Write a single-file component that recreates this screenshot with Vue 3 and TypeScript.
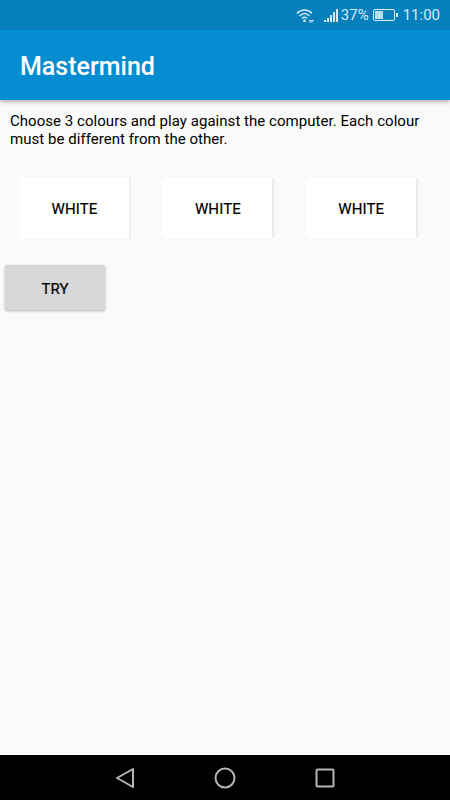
<script setup lang="ts">
const colours: string[] = ["WHITE", "WHITE", "WHITE"];
</script>

<template>
  <div class="screen">
    <div class="status-bar">
      <svg class="wifi" width="18" height="15" viewBox="0 0 18 15">
        <path d="M1 5.4C5.4 1 11.6 1 16 5.4" fill="none" stroke="#d6eaf6" stroke-width="1.5" />
        <path d="M3.5 8C6.6 5 10.4 5 13.5 8" fill="none" stroke="#d6eaf6" stroke-width="1.5" />
        <path d="M6 10.5C7.6 9 9.4 9 11 10.5" fill="none" stroke="#d6eaf6" stroke-width="1.5" />
        <circle cx="8.5" cy="12.8" r="1.4" fill="#d6eaf6" />
        <path d="M13 12.5h5M13 14h4" stroke="#d6eaf6" stroke-width="0.9" />
      </svg>
      <svg class="signal" width="15" height="13" viewBox="0 0 15 13">
        <rect x="0" y="11" width="2" height="2" fill="#d6eaf6" />
        <rect x="3" y="9" width="2" height="4" fill="#d6eaf6" />
        <rect x="6" y="6" width="2" height="7" fill="#d6eaf6" />
        <rect x="9" y="3" width="2" height="10" fill="#d6eaf6" />
        <rect x="12" y="0" width="2" height="13" fill="#d6eaf6" />
      </svg>
      <span class="percent">37%</span>
      <svg class="battery" width="25" height="12" viewBox="0 0 25 12">
        <rect x="0.5" y="0.5" width="21" height="11" rx="1.5" fill="none" stroke="#d6eaf6" />
        <rect x="2" y="2" width="8" height="8" fill="#bcdcf0" />
        <rect x="23" y="4" width="2" height="4" fill="#d6eaf6" />
      </svg>
      <span class="time">11:00</span>
    </div>

    <header class="app-bar">
      <h1>Mastermind</h1>
    </header>

    <main class="content">
      <p class="intro">Choose 3 colours and play against the computer. Each colour must be different from the other.</p>

      <div class="picker-row">
        <button v-for="(c, i) in colours" :key="i" class="picker">{{ c }}</button>
      </div>

      <button class="try">TRY</button>
    </main>

    <nav class="nav-bar">
      <svg width="20" height="22" viewBox="0 0 20 22">
        <path d="M18 2L2 11L18 20Z" fill="none" stroke="#b5b5b5" stroke-width="2" stroke-linejoin="round" />
      </svg>
      <svg width="22" height="22" viewBox="0 0 22 22">
        <circle cx="11" cy="11" r="9.5" fill="none" stroke="#b5b5b5" stroke-width="2" />
      </svg>
      <svg width="20" height="20" viewBox="0 0 20 20">
        <rect x="1.5" y="1.5" width="17" height="17" rx="1" fill="none" stroke="#b5b5b5" stroke-width="2" />
      </svg>
    </nav>
  </div>
</template>

<style>
html, body {
  margin: 0;
  background: #fafafa;
}
</style>

<style scoped>
.screen {
  width: 450px;
  height: 800px;
  display: flex;
  flex-direction: column;
  background: #fafafa;
  font-family: Roboto, "Liberation Sans", sans-serif;
  overflow: hidden;
}
.status-bar {
  height: 30px;
  flex: none;
  background: #0680bd;
  color: #d6eaf6;
  display: flex;
  align-items: center;
  justify-content: flex-end;
  padding-right: 10px;
  font-size: 15px;
  box-sizing: border-box;
}
.wifi { margin-right: 10px; }
.signal { margin-right: 2px; }
.percent { margin-right: 4px; }
.battery { margin-right: 5px; }
.app-bar {
  height: 70px;
  flex: none;
  background: #058dd1;
  display: flex;
  align-items: center;
  padding: 2px 0 0 20px;
  box-sizing: border-box;
  box-shadow: 0 2px 4px rgba(0, 0, 0, 0.3);
  position: relative;
}
.app-bar h1 {
  margin: 0;
  color: #fff;
  font-size: 25px;
  font-weight: 500;
}
.content {
  flex: 1;
  min-height: 0;
  display: flex;
  flex-direction: column;
  align-items: flex-start;
}
.intro {
  margin: 12px 10px 0;
  font-size: 15px;
  letter-spacing: 0.04px;
  line-height: 18px;
  color: #000;
}
.picker-row {
  display: flex;
  gap: 32.4px;
  margin: 30px 0 0 20px;
}
.picker {
  width: 111px;
  height: 60px;
  border: none;
  border-right: 2px solid #ececec;
  background: #fff;
  font: 400 15px Roboto, "Liberation Sans", sans-serif;
  letter-spacing: 0.1px;
  -webkit-text-stroke: 0.2px #000;
  color: #000;
  padding: 1px 0 0;
}
.try {
  width: 100px;
  height: 45px;
  margin: 27px 0 0 5px;
  border: none;
  border-radius: 2px;
  background: #d6d7d7;
  box-shadow: 0 1px 3px rgba(0, 0, 0, 0.3);
  font: 400 15px Roboto, "Liberation Sans", sans-serif;
  -webkit-text-stroke: 0.2px #000;
  color: #000;
  padding: 3px 0 0;
}
.nav-bar {
  height: 45px;
  flex: none;
  background: #000;
  display: flex;
  align-items: center;
  justify-content: center;
  gap: 79px;
}
</style>
